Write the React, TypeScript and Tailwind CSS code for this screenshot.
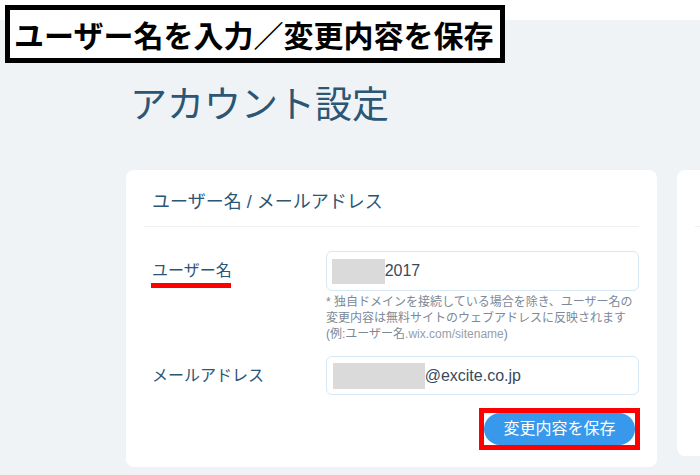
import React from "react";

const jp = "font-['Liberation_Sans','Noto_Sans_CJK_JP',sans-serif]";

export default function App() {
  return (
    <div className={`relative w-[700px] h-[475px] overflow-hidden bg-[#eff3f6] ${jp}`}>
      <div className="h-[20px] bg-white" />
      <div className="pl-[130px] mt-[67px]">
        <h1 className="text-[37px] leading-[37px] text-[#2b5675] font-normal">アカウント設定</h1>
      </div>
      <div className="flex gap-[20px] pl-[126px] mt-[46px] items-start">
        <div className="w-[531px] h-[297px] shrink-0 rounded-[8px] bg-white px-[18px]">
          <div className="pl-[8px] pt-[21px] h-[57px] text-[18px] leading-[22px] text-[#2b5675] border-b border-[#eef1f4]">
            ユーザー名 / メールアドレス
          </div>
          <div className="flex items-center mt-[24px]">
            <div className="w-[182px] pl-[8px]">
              <span className="relative text-[16px] leading-[20px] text-[#2b5675]">
                ユーザー名
                <span className="absolute left-[-1px] top-[21px] w-[80px] h-[5px] bg-[#ff0000]" />
              </span>
            </div>
            <div className="w-[314px] h-[40px] rounded-[6px] border-[1.5px] border-[#d6e7f6] bg-white flex items-center pl-[5px]">
              <span className="w-[53px] h-[25px] bg-[#dadada]" />
              <span className="text-[16px] text-[#3a4a5a]">2017</span>
            </div>
          </div>
          <div className="ml-[182px] mt-[3px] text-[12px] leading-[16px] text-[#7b8998] whitespace-nowrap">
            <div>* 独自ドメインを接続している場合を除き、ユーザー名の</div>
            <div>変更内容は無料サイトのウェブアドレスに反映されます</div>
            <div>
              (例:ユーザー名<span className="text-[#959eaa]">.wix.com/sitename</span>)
            </div>
          </div>
          <div className="flex items-center mt-[14px]">
            <div className="w-[182px] pl-[8px] text-[16px] leading-[20px] text-[#2b5675]">メールアドレス</div>
            <div className="w-[314px] h-[39px] rounded-[6px] border-[1.5px] border-[#d6e7f6] bg-white flex items-center pl-[6px]">
              <span className="w-[92px] h-[26px] bg-[#dadada]" />
              <span className="text-[16px] text-[#3a4a5a]">@excite.co.jp</span>
            </div>
          </div>
          <div className="flex justify-end mt-[13px] mr-[-1px]">
            <div className="border-[5px] border-[#ff0000] bg-white">
              <button className="w-[151px] h-[32px] rounded-full bg-[#3899ec] text-white text-[16px] leading-[32px] block">
                変更内容を保存
              </button>
            </div>
          </div>
        </div>
        <div className="w-[200px] h-[286px] shrink-0 rounded-[8px] bg-white px-[18px]">
          <div className="h-[57px] border-b border-[#eef1f4]" />
        </div>
      </div>
      <div className="absolute left-[5px] top-[5px] w-[500px] h-[58px] border-[5px] border-black bg-white flex items-center pl-[4px]">
        <span className="text-[30px] leading-[36px] font-bold text-black whitespace-nowrap font-['Noto_Sans_CJK_JP',sans-serif]">
          ユーザー名を入力／変更内容を保存
        </span>
      </div>
    </div>
  );
}
